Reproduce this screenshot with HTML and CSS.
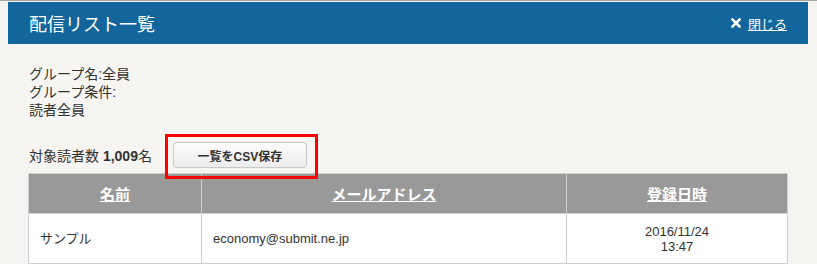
FILE: index.html
```html
<!DOCTYPE html>
<html lang="ja">
<head>
  <meta charset="UTF-8" />
  <title>配信リスト一覧</title>
  <link rel="stylesheet" href="styles.css">
</head>
<body>
  <div class="page">
    <header class="titlebar">
      <h1>配信リスト一覧</h1>
      <a href="#" class="close">
        <svg class="close-icon" width="10" height="10" viewBox="0 0 10 10">
          <path d="M1.5 1.5 L8.5 8.5 M8.5 1.5 L1.5 8.5" stroke="#fff" stroke-width="2.6" stroke-linecap="square" />
        </svg>
        <span>閉じる</span>
      </a>
    </header>

    <div class="content">
      <div class="info">
        <p>グループ名:全員</p>
        <p>グループ条件:</p>
        <p>読者全員</p>
      </div>

      <div class="count-row">
        <span class="count">対象読者数 <b>1,009</b>名</span>
        <span class="csv-wrap">
          <button class="csv">一覧をCSV保存</button>
        </span>
      </div>

      <table class="list">
        <thead>
          <tr>
            <th class="col-name"><a href="#">名前</a></th>
            <th class="col-mail"><a href="#">メールアドレス</a></th>
            <th class="col-date"><a href="#">登録日時</a></th>
          </tr>
        </thead>
        <tbody>
          <tr>
            <td>サンプル</td>
            <td>economy@submit.ne.jp</td>
            <td class="date">2016/11/24<br>13:47</td>
          </tr>
        </tbody>
      </table>
    </div>
  </div>
</body>
</html>
```

FILE: styles.css
```css
* {
  margin: 0;
  padding: 0;
  box-sizing: border-box;
}

body {
  font-family: "Liberation Sans", "Noto Sans CJK JP", sans-serif;
  font-size: 14px;
  color: #333;
  background-color: #f6f5f1;
  border-top: 1px solid #a5a5a5;
}

.page {
  width: 800px;
  margin-left: 8px;
}

.titlebar {
  margin-top: 1px;
  height: 42px;
  background-color: #12669b;
  display: flex;
  align-items: center;
  justify-content: space-between;
  padding: 0 21px;
}

.titlebar h1 {
  font-size: 18px;
  font-weight: normal;
  color: #fff;
}

.close {
  display: flex;
  align-items: center;
  gap: 7px;
  color: #fff;
  font-size: 13px;
}

.close span {
  text-decoration: underline;
}

.content {
  padding: 21px 20px 0;
}

.info {
  padding-left: 1px;
  line-height: 18px;
}

.count-row {
  display: flex;
  align-items: center;
  height: 26px;
  margin-top: 23px;
  padding-left: 1px;
}

.count b {
  font-weight: bold;
}

.csv-wrap {
  position: relative;
  margin-left: 21px;
}

.csv-wrap::after {
  content: "";
  position: absolute;
  left: -8px;
  top: -8px;
  right: -11px;
  bottom: -11px;
  border: 3px solid #f00;
}

.csv {
  display: block;
  width: 134px;
  height: 26px;
  font-family: inherit;
  font-size: 12px;
  font-weight: bold;
  color: #333;
  border: 1px solid #c8c8c8;
  border-radius: 4px;
  background: linear-gradient(#fcfcfc, #ececec);
}

.list {
  width: 760px;
  margin-top: 5px;
  border-collapse: collapse;
  background-color: #fff;
}

.list th,
.list td {
  border: 1px solid #cfcfcb;
}

.list th {
  height: 40px;
  background-color: #999;
  font-size: 15px;
  font-weight: bold;
}

.list th a {
  color: #fff;
}

.col-name {
  width: 173px;
}

.col-mail {
  width: 365px;
}

.list td {
  height: 50px;
  padding: 0 11px;
  font-size: 13px;
  line-height: 15px;
}

.list td.date {
  text-align: center;
}
```
